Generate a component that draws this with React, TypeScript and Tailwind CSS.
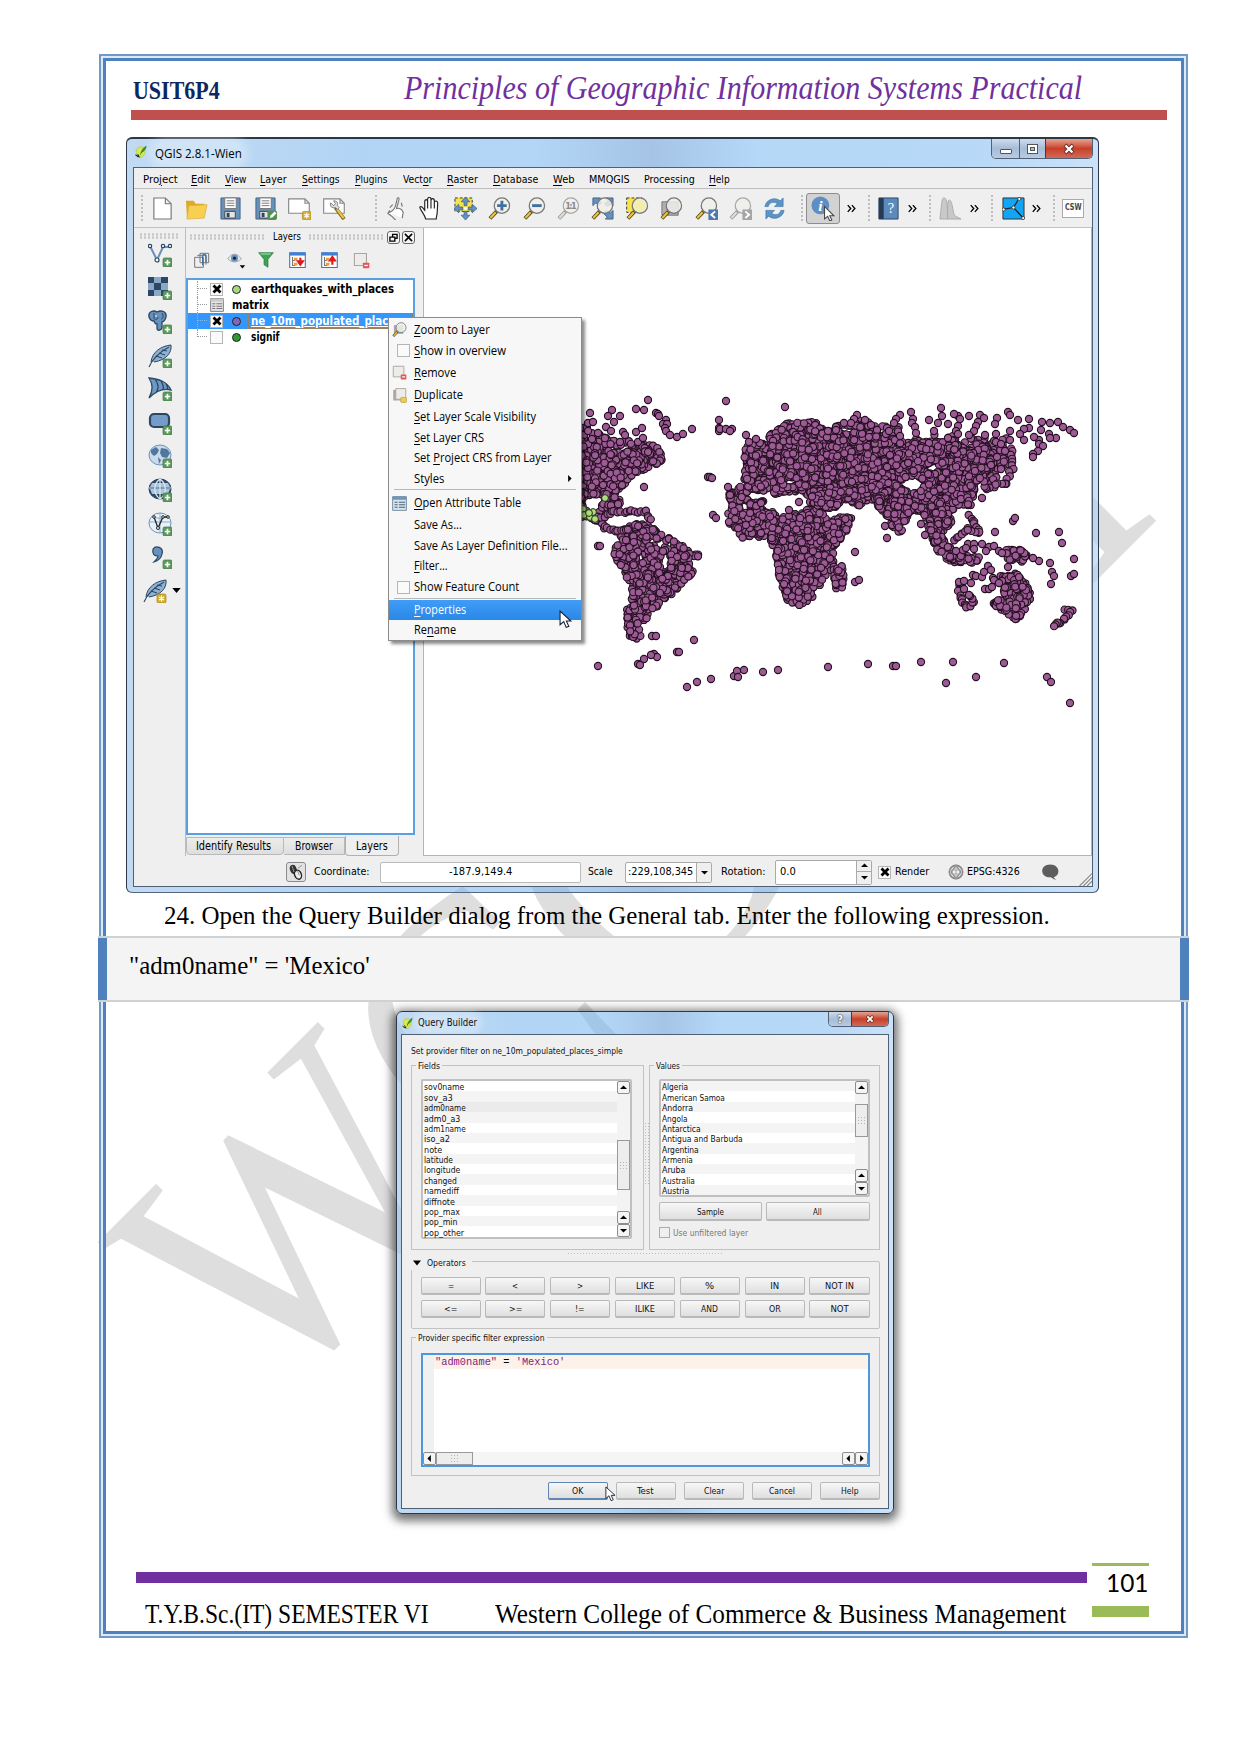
import React, { useLayoutEffect, useRef, useState } from "react";

/* Text set to an exact width: it is measured once, then condensed or widened. */
function Fit({ w, children, className = "" }: { w: number; children: React.ReactNode; className?: string }) {
  const ref = useRef<HTMLSpanElement>(null);
  const [k, setK] = useState(1);
  useLayoutEffect(() => {
    if (ref.current) setK(w / ref.current.offsetWidth);
  }, [w]);
  return (
    <span className={"inline-block shrink-0 whitespace-nowrap " + className} style={{ width: w }}>
      <span ref={ref} className="inline-block origin-left" style={{ transform: `scaleX(${k})` }}>
        {children}
      </span>
    </span>
  );
}

/* Label with an underlined accelerator letter, marked by "&". */
function Accel({ t }: { t: string }) {
  const i = t.indexOf("&");
  if (i < 0) return <>{t}</>;
  return (
    <>
      {t.slice(0, i)}
      <u className="underline-offset-2">{t[i + 1]}</u>
      {t.slice(i + 2)}
    </>
  );
}

function Svg({ children, s = 24, className = "" }: { children: React.ReactNode; s?: number; className?: string }) {
  return (
    <svg viewBox="0 0 24 24" width={s} height={s} className={"shrink-0 " + className} fill="none">
      {children}
    </svg>
  );
}

const B = "#6790bb";
const D = "#2c4763";

const Plus = () => (
  <g>
    <rect x="15" y="15" width="9" height="9" rx="1.5" fill="#5c9a5c" stroke="#3f7843" strokeWidth=".7" />
    <path d="M19.500 16.800v5.400M16.800 19.500h5.400" stroke="#fff" strokeWidth="1.700" />
  </g>
);
const Star = ({ x = 15, y = 15 }) => (
  <g transform={`translate(${x} ${y})`}>
    <rect width="9" height="9" rx="1.500" fill="#d3ae33" stroke="#a88718" strokeWidth=".7" />
    <path d="M4.500 1.500v6M1.900 3l5.200 3M7.100 3L1.900 6" stroke="#fff" strokeWidth="1.200" />
  </g>
);
const Lens = ({ gray = false, children }: { gray?: boolean; children?: React.ReactNode }) => (
  <g>
    <path d="M9 15L2 22.500" stroke={gray ? "#999" : "#554a20"} strokeWidth="4" />
    <path d="M8 16L2.500 22" stroke={gray ? "#ddd" : "#eec23c"} strokeWidth="2.200" />
    <circle cx="14.500" cy="9" r="8" fill="#eeeeea" fillOpacity=".85" stroke={gray ? "#a8a8a8" : "#777"} strokeWidth="1.300" />
    {children}
  </g>
);
const Page = () => <path d="M3 1h12l6 6v16H3zM15 1v6h6" fill="#fff" stroke="#777" strokeWidth="1.200" />;
const Wide = () => <path d="M.7 2h17l4.500 4.500V17H.7zM17.700 2v4.500h4.500" fill="#fff" stroke="#888" strokeWidth="1.200" />;
const Floppy = () => (
  <g>
    <path d="M2 1h20v22H2z" fill={B} stroke="#44658a" />
    <path d="M6 1h12v11H6z" fill="#fff" stroke="#777" />
    <path d="M8 4h8M8 6.500h8M8 9h8" stroke="#777" />
    <path d="M6 15h11v7H6z" fill="#e5e5e5" stroke="#444" />
    <path d="M8 16.500h3v4.500H8z" fill={D} />
  </g>
);
const Arrow = ({ r }: { r: number }) => (
  <path transform={`rotate(${r} 12 12)`} d="M12 0l4.500 5h-3v4h-3V5h-3z" fill={B} stroke="#3f648c" strokeWidth=".8" />
);

const fileIcons = [
  <Page />,
  <g>
    <path d="M1 4h8l2 3h9v14H2z" fill="#dba92c" />
    <path d="M4 9l19-1-3 14-18 1z" fill="#f8cf50" stroke="#ddb040" strokeWidth=".8" />
  </g>,
  <Floppy />,
  <g>
    <Floppy />
    <rect x="14" y="14" width="10" height="10" rx="2" fill="#528f53" />
    <path d="M16.500 22l1-3 4-4 2 2-4 4z" fill="#fff" />
  </g>,
  <g>
    <Wide />
    <Star />
  </g>,
  <g>
    <Wide />
    <path d="M13 11l9 12" stroke="#8b6a1f" strokeWidth="4" />
    <path d="M14.500 12.500l7 9.500" stroke="#efc749" strokeWidth="2.200" />
    <path d="M8 6c-1 4 1 6 5 5l2 2 2-2-2-2c1-4-1-5-4-5l2 3-2 2z" fill="#ddd" stroke="#666" strokeWidth=".8" />
  </g>,
];

const navIcons = [
  <path d="M4 16c4-1 6-3 7-7l2-8c2-1 2 1 1 4l-2 7c3-1 6 1 7 4l-1 6M5 14l-2 3 4 3 4 4M17 6l1 4M8 8L5 11" fill="#fff" stroke="#777" strokeWidth="1.200" />,
  <path d="M7 23c-1-4-3-6-4-8-2-3-3-5-1-5 2 0 3 3 4 4V5c0-3 3-3 3 0V2.500c0-3 3.500-3 3.500 0V4c0-3 3.500-3 3.500 0v2c0-2.500 3.500-2.500 3.500.5L19 16c0 3-1 4-1 7zM9 5v7M12.500 4v8M16 5v7" fill="#fff" stroke="#222" strokeWidth="1.200" />,
  <g>
    <path d="M1 1h18v14H1z" fill="#f4e44a" stroke="#333" strokeDasharray="3 2" />
    <Arrow r={0} /><Arrow r={90} /><Arrow r={180} /><Arrow r={270} />
    <circle cx="12" cy="12" r="1.500" fill="#fff" />
  </g>,
  <Lens><path d="M14.500 4v10M9.500 9h10" stroke="#416f9f" strokeWidth="3" /></Lens>,
  <Lens><path d="M9.500 9h10" stroke="#416f9f" strokeWidth="3" /></Lens>,
  <Lens gray><text x="14.500" y="12" fontSize="8.500" fontWeight="bold" textAnchor="middle" fill="#888" fontFamily="DejaVu Sans, sans-serif" textLength="12">1:1</text></Lens>,
  <g>
    <path d="M2 1h8L8 3l3 3-3 3-3-3-3 3zM23 1v8l-2-2-4 3-3-3 4-3-3-3zM23 23h-8l2-2-4-4 3-3 4 3 3-3z" fill={B} stroke="#3f648c" />
    <Lens />
  </g>,
  <g>
    <path d="M.7 1h16v15H.7z" fill="#f6e448" stroke="#333" strokeDasharray="3 2" />
    <Lens><circle cx="14.500" cy="9" r="6" fill="#f3edaa" /></Lens>
  </g>,
  <g>
    <path d="M2 5h17v14H2z" fill="#b6acb4" stroke="#777" />
    <Lens />
  </g>,
  <g><Lens /><path d="M14 13h10v11H14z" fill="#4c7bab" /><path d="M21 15l-4 3.500 4 3.500" stroke="#fff" strokeWidth="2" /></g>,
  <g><Lens gray /><path d="M14 13h10v11H14z" fill="#a5a5a5" /><path d="M17 15l4 3.500-4 3.500" stroke="#fff" strokeWidth="2" /></g>,
  <g fill="#5b94c9" stroke="#376b9d" strokeWidth=".6">
    <path d="M2 10C3 3 12-1 18 4l3-3v9h-9l3-3C11 4 6 6 5.500 10z" />
    <path d="M22 14c-1 7-10 11-16 6l-3 3v-9h9l-3 3c4 3 9 1 9.500-3z" />
  </g>,
];

const Feather = () => (
  <g>
    <path d="M3 18C4 8 13 2 23 1c1 8-5 15-17 17" fill="#8fb2d3" stroke={D} />
    <path d="M1 23C4 16 10 9 21 3M8 12l6 2M11 9l6 2M14 6l5 1" stroke={D} strokeWidth="1.100" />
  </g>
);

const sideIcons = [
  <g>
    <path d="M2 3l7 14 6-13h7" stroke={B} strokeWidth="2" />
    <g fill="#fff" stroke={D} strokeWidth="1.200"><circle cx="2" cy="3" r="1.700" /><circle cx="9" cy="17" r="2" /><circle cx="15" cy="3" r="1.700" /><circle cx="22" cy="3" r="1.700" /></g>
  </g>,
  <g>
    <path d="M0 1h20v19H0z" fill="#89a8c9" />
    <path d="M0 1h6v6H0zM13 1h7v6h-7zM6 7h7v7H6zM0 14h6v6H0zM13 14h7v6h-7z" fill={D} />
  </g>,
  <g>
    <path d="M1 7C0 1 6 0 9 2c4-2 10-1 9 5-1 3-2 5-4 5v6c-1 3-5 3-5 0v-4c-3 0-2-2-3-3-3 0-4-1-5-4z" fill={B} stroke={D} strokeWidth="1.300" />
    <path d="M6 3v5c0 2 4 2 4-1M14 3c2 3 1 6-1 6" stroke={D} />
    <circle cx="8" cy="6" r=".8" fill="#fff" />
  </g>,
  <Feather />,
  <path d="M1 1c9 1 18 3 22 12-8-2-15 1-22 8 4-7 4-14 0-20zM7 2c4 6 4 9 1 14M13 4c3 5 3 8 1 9M18 7c2 3 2 5 1 6" fill="#6f99c5" stroke={D} strokeWidth="1.300" />,
  <rect x="2" y="3" width="19" height="13" rx="4" fill="#759bc9" stroke={D} strokeWidth="2.200" />,
  <g>
    <ellipse cx="12" cy="11" rx="11" ry="10" fill="#c9daec" stroke="#6d93ba" />
    <path d="M3 6l5-3 3 3-2 4-3 2-3-3zM13 4l6 1 3 4-3 5-5-1-2-4zM10 13l3 3-2 4z" fill="#50779f" />
  </g>,
  <g>
    <ellipse cx="12" cy="11" rx="11" ry="10" fill={D} stroke={D} />
    <path d="M4 5h16l2 4H2zM2 11h20l-2 5H4z" fill="#a8c4df" />
    <path d="M12 1v20M12 1c-7 5-7 15 0 20M12 1c7 5 7 15 0 20M1 10h22" stroke="#e0ebf5" strokeWidth="1.200" />
  </g>,
  <g>
    <ellipse cx="12" cy="11" rx="11" ry="10" fill="#e8f0f8" stroke="#6d93ba" />
    <path d="M12 1v20M1 10h22M4 4c5 3 11 3 16 0" stroke="#8aaed0" />
    <path d="M6 5l4 11 5-11h5" stroke="#222" strokeWidth="1.300" />
    <g fill="#fff" stroke="#222"><circle cx="6" cy="5" r="1.300" /><circle cx="10" cy="16" r="1.500" /><circle cx="15" cy="5" r="1.300" /><circle cx="20" cy="5" r="1.300" /></g>
  </g>,
  <path d="M5 4c3-4 11-2 9 5-1 5-4 7-8 8 2-2 4-4 4-6-4 0-6-2-5-7z" fill={B} stroke={D} strokeWidth="1.200" />,
];

const Logo = ({ s = 13 }) => (
  <Svg s={s}>
    <path d="M2 9C5 2 13 2 18 6c2 8-1 14-7 17-5-1-9-7-9-14z" fill="#d8ea4a" stroke="#a5b83e" />
    <path d="M9 20C10 12 14 5 21 1c1 5-3 10-8 13z" fill="#2f8a35" />
    <path d="M1 18l5 4M5 17l3 6" stroke="#222" strokeWidth="2" />
  </Svg>
);

const Grip = ({ className = "" }) => (
  <span className={"h-7 w-[5px] shrink-0 bg-[radial-gradient(circle,#bdbdbd_1px,transparent_1.300px)] bg-[length:4px_4px] " + className} />
);
const HGrip = ({ className = "" }) => (
  <span className={"h-[6px] bg-[radial-gradient(circle,#c3c3c3_1px,transparent_1.300px)] bg-[length:4px_3px] " + className} />
);
const Slot = ({ children }: { children: React.ReactNode }) => (
  <span className="flex w-[34.400px] shrink-0 justify-center"><Svg s={23}>{children}</Svg></span>
);
const More = ({ className = "" }) => (
  <Svg s={9} className={className}><path d="M2 3l8 9-8 9M13 3l8 9-8 9" stroke="#000" strokeWidth="3.500" /></Svg>
);
const Pointer = ({ className = "", h = 18 }) => (
  <svg viewBox="0 0 12 18" height={h} className={className}>
    <path d="M1 1v13l3.500-3 2.300 5.500 2.500-1L7 10.500h4.300z" fill="#fff" stroke="#111c33" />
  </svg>
);
const Tri = ({ d }: { d: "up" | "down" | "left" | "right" }) => {
  const p = { up: "M0 7l5-5 5 5z", down: "M0 3l5 5 5-5z", left: "M7 0L2 5l5 5z", right: "M3 0l5 5-5 5z" }[d];
  return <svg viewBox="0 0 10 10" width="7" height="7"><path d={p} fill="#000" /></svg>;
};

/* ---------- World map of populated places ---------- */
type Pt = [number, number];
const lands: { n: number; p: Pt[] }[] = [
  { n: 45, p: [[583, 425], [596, 435], [620, 440], [638, 445], [648, 440], [652, 448], [582, 448]] },
  { n: 400, p: [[580, 442], [592, 447], [612, 452], [638, 453], [642, 446], [655, 446], [664, 461], [648, 469], [632, 475], [622, 487], [612, 496], [582, 497]] },
  { n: 35, p: [[605, 495], [616, 496], [621, 505], [608, 512], [598, 513]] },
  { n: 36, p: [[578, 492], [586, 495], [588, 510], [580, 520]] },
  { n: 560, p: [[620, 532], [632, 524], [648, 526], [664, 537], [682, 547], [698, 555], [690, 577], [678, 588], [664, 602], [650, 615], [641, 627], [639, 643], [627, 637], [625, 612], [631, 585], [620, 572], [612, 555], [616, 542]] },
  { n: 980, p: [[727, 496], [740, 487], [752, 492], [764, 501], [774, 512], [787, 515], [800, 514], [812, 508], [818, 506], [826, 520], [832, 519], [851, 517], [845, 533], [832, 549], [833, 568], [820, 584], [809, 604], [790, 608], [781, 590], [777, 572], [775, 555], [768, 537], [742, 539], [727, 524]] },
  { n: 40, p: [[832, 571], [845, 565], [841, 589], [834, 591]] },
  { n: 900, p: [[742, 450], [756, 442], [770, 448], [768, 436], [784, 425], [798, 423], [814, 423], [828, 434], [830, 506], [812, 506], [800, 497], [782, 494], [765, 497], [749, 491], [742, 482], [745, 467]] },
  { n: 90, p: [[832, 428], [856, 417], [872, 424], [900, 426], [916, 430], [950, 434], [972, 434], [986, 440], [1008, 436], [1012, 450], [830, 446]] },
  { n: 75, p: [[972, 443], [1000, 450], [1012, 452], [1010, 470], [1000, 478], [985, 486]] },
  { n: 2100, p: [[826, 434], [842, 428], [856, 422], [872, 428], [886, 438], [905, 444], [930, 442], [950, 444], [972, 450], [988, 449], [994, 462], [988, 472], [976, 482], [970, 508], [956, 506], [949, 514], [951, 526], [942, 532], [936, 540], [924, 522], [919, 512], [907, 516], [902, 534], [891, 531], [883, 513], [868, 501], [858, 507], [840, 501], [834, 511], [812, 506], [808, 492], [824, 486]] },
  { n: 110, p: [[925, 522], [938, 534], [947, 547], [958, 556], [978, 558], [976, 564], [950, 563], [934, 551]] },
  { n: 160, p: [[999, 577], [1014, 573], [1027, 587], [1030, 598], [1020, 618], [1013, 621], [1000, 612], [991, 603], [1003, 598]] },
  { n: 38, p: [[1003, 550], [1021, 551], [1029, 558], [1022, 563], [1006, 561]] },
];
const holes: [number, number, number, number][] = [
  [798, 502, 8, 7], [743, 507, 2, 3], [751, 497, 4, 2], [767, 507, 4, 2], [789, 483, 3, 2], [781, 514, 5, 1], [767, 496, 1, 2],
  [911, 485, 9, 5], [931, 469, 6, 2], [664, 562, 2, 7], [659, 545, 3, 2], [640, 556, 1, 1], [588, 504, 4, 5], [846, 431, 6, 1], [908, 432, 6, 5],
];
const trails: Pt[][] = [
  [[596, 518], [604, 528], [616, 533], [628, 530]],
  [[584, 517], [596, 520], [612, 513], [630, 512], [644, 513], [651, 521]],
  [[1011, 450], [1011, 470], [1004, 484], [994, 487], [986, 490], [980, 480]],
  [[968, 516], [972, 524], [979, 534], [968, 530]],
  [[953, 541], [961, 534], [968, 530]],
  [[958, 583], [957, 590], [960, 600], [965, 608], [972, 604], [970, 597]],
  [[1065, 610], [1070, 613], [1064, 619], [1057, 625], [1052, 627]],
];
const singles: Pt[] = [
  [655, 414], [657, 415], [658, 417], [665, 421], [662, 425], [666, 425], [664, 429], [665, 432], [669, 436], [676, 438], [682, 435],
  [718, 429], [718, 432], [719, 430], [725, 430], [731, 430], [729, 432],
  [899, 416], [895, 420], [893, 424], [886, 429], [885, 435], [912, 420], [911, 424], [914, 428], [915, 434], [888, 432], [899, 437],
  [856, 416], [853, 420], [864, 421], [870, 426], [850, 424], [843, 424], [835, 428], [835, 431], [827, 432],
  [957, 417], [959, 420], [957, 427], [955, 432], [957, 435], [979, 416], [977, 423], [975, 427], [973, 432], [968, 436],
  [955, 552], [962, 551], [967, 545], [973, 545], [981, 545], [988, 548], [993, 547], [998, 552], [1001, 554], [973, 550], [965, 549], [985, 552],
  [958, 583], [963, 582], [970, 584], [972, 576], [975, 577], [981, 578], [983, 573], [987, 567], [990, 571], [992, 579], [993, 581],
  [984, 590], [988, 590], [991, 588], [1001, 582], [998, 584], [963, 590], [968, 596],
  [647, 401], [725, 402], [784, 408], [635, 410], [643, 411], [611, 411], [607, 417], [619, 417], [589, 414], [587, 424], [592, 423], [613, 423],
  [605, 428], [610, 432], [587, 432], [597, 434], [622, 433], [624, 436], [619, 443], [635, 433], [641, 429], [637, 443], [642, 439], [591, 440],
  [691, 430], [718, 421], [707, 478], [709, 478], [711, 479], [643, 488], [712, 516], [715, 519], [597, 547], [599, 547], [651, 637], [655, 637], [693, 641],
  [653, 655], [656, 658], [650, 656], [643, 660], [637, 665], [639, 666], [676, 653], [678, 653], [597, 667], [686, 688], [696, 683], [710, 680],
  [733, 677], [736, 672], [737, 678], [743, 671], [762, 673], [777, 671], [827, 668], [867, 665], [892, 667], [895, 667], [920, 663], [952, 663],
  [1003, 664], [945, 684], [975, 678], [1046, 678], [1050, 683], [1069, 704], [854, 553], [854, 583], [858, 581], [886, 539], [884, 527],
  [920, 525], [924, 536], [981, 499], [1012, 522], [1014, 519], [994, 533], [1035, 534], [1058, 533], [1061, 544], [1073, 560], [1049, 564],
  [1051, 573], [1053, 577], [1050, 585], [1070, 577], [1073, 575], [1038, 562], [1032, 559], [1007, 568], [940, 409], [910, 413], [928, 421],
  [941, 417], [937, 424], [933, 432], [947, 425], [953, 415], [968, 417], [983, 419], [996, 419], [994, 425], [1007, 413], [1009, 416],
  [1017, 421], [1028, 420], [1028, 429], [1023, 430], [1019, 435], [1023, 441], [1009, 432], [1009, 441], [995, 435], [995, 443], [984, 436],
  [1041, 423], [1049, 424], [1057, 423], [1062, 428], [1069, 431], [1073, 434], [1040, 431], [1048, 435], [1055, 439], [1038, 441], [1033, 438],
  [1038, 445], [1042, 447], [1037, 452], [1032, 455], [1032, 458], [1049, 439], [745, 436], [748, 443], [755, 440], [727, 488], [729, 496], [798, 503],
  [1000, 445], [1004, 452], [996, 458], [990, 466], [1000, 470], [947, 439], [760, 504], [788, 511],
];

function seeded(seed: number) {
  let s = seed;
  return () => ((s = (s * 16807) % 2147483647) - 1) / 2147483646;
}
function inside([x, y]: Pt, p: Pt[]) {
  let r = false;
  for (let i = 0, j = p.length - 1; i < p.length; j = i++)
    if (p[i][1] > y !== p[j][1] > y && x < ((p[j][0] - p[i][0]) * (y - p[i][1])) / (p[j][1] - p[i][1]) + p[i][0]) r = !r;
  return r;
}
function buildPlaces(): Pt[] {
  const rnd = seeded(4217);
  const out: Pt[] = [];
  const dry = ([x, y]: Pt) => !holes.some(([a, b, c, d]) => ((x - a) / (c + 3)) ** 2 + ((y - b) / (d + 3)) ** 2 < 1);
  for (const { n, p } of lands) {
    const xs = p.map((q) => q[0]);
    const ys = p.map((q) => q[1]);
    const x0 = Math.min(...xs), x1 = Math.max(...xs), y0 = Math.min(...ys), y1 = Math.max(...ys);
    for (let k = 0, guard = 0; k < n && guard < 20000; guard++) {
      const q: Pt = [x0 + rnd() * (x1 - x0), y0 + rnd() * (y1 - y0)];
      if (inside(q, p) && dry(q)) { out.push(q); k++; }
    }
  }
  for (const t of trails)
    for (let i = 0; i + 1 < t.length; i++) {
      const [a, b] = [t[i], t[i + 1]];
      const m = Math.max(1, Math.round(Math.hypot(b[0] - a[0], b[1] - a[1]) / 3.5));
      for (let k = 0; k <= m; k++) out.push([a[0] + ((b[0] - a[0]) * k) / m + rnd() * 3 - 1.5, a[1] + ((b[1] - a[1]) * k) / m + rnd() * 3 - 1.5]);
    }
  return out.concat(singles);
}
const places = buildPlaces();
const quakes: Pt[] = [[582, 510], [583, 516], [589, 518], [592, 513], [588, 514], [594, 520], [604, 499]];

const WorldMap = () => (
  <svg viewBox="423 229 667 627" width="667" height="627">
    {places.map(([x, y], i) => <circle key={i} cx={x} cy={y} r="3.600" fill="#9c5b95" stroke="#241020" strokeWidth="1.100" />)}
    {quakes.map(([x, y], i) => <circle key={i} cx={x} cy={y} r="3.400" fill="#aede7c" stroke="#20301a" strokeWidth="1" />)}
  </svg>
);

/* ---------- QGIS window ---------- */
const menus: [string, number, string][] = [
  ["Pro&ject", 35, "ml-[9px]"], ["&Edit", 19, "ml-[13px]"], ["&View", 21, "ml-[15px]"], ["&Layer", 27, "ml-[14px]"],
  ["&Settings", 38, "ml-[15px]"], ["&Plugins", 32, "ml-[15px]"], ["Vect&or", 29, "ml-[16px]"], ["&Raster", 31, "ml-[15px]"],
  ["&Database", 45, "ml-[15px]"], ["&Web", 22, "ml-[15px]"], ["MMQGIS", 41, "ml-[14px]"], ["Processing", 51, "ml-[14px]"], ["&Help", 21, "ml-[14px]"],
];

const glass = "bg-[linear-gradient(90deg,rgba(160,198,236,.65),rgba(130,186,238,.62)_25%,rgba(115,180,240,.55)_42%,rgba(110,160,214,.62)_54%,rgba(120,184,242,.55)_65%,rgba(125,185,240,.55)_88%,rgba(175,210,245,.65))]";

const Check = ({ on = false, className = "" }) => (
  <span className={"flex h-[13px] w-[13px] shrink-0 items-center justify-center border border-[#b5b5b5] bg-[#fafafa] " + className}>
    {on && <svg viewBox="0 0 10 10" width="10" height="10"><path d="M1.500 1.500l7 7M8.500 1.500l-7 7" stroke="#000" strokeWidth="2.800" /></svg>}
  </span>
);

const SmallSheet = ({ kind }: { kind: "minus" | "dup" }) => (
  <g>
    {kind === "dup" && <path d="M2 3h17v17H2z" fill="#aaa69f" />}
    <path d={kind === "dup" ? "M6 1h16v17H6z" : "M2 2h17v17H2z"} fill="#eeece8" stroke="#aaa69f" strokeWidth="1.500" />
    {kind === "minus" ? (
      <g><rect x="14" y="15" width="9" height="8" rx="1" fill="#e0585b" /><path d="M16 19h5" stroke="#fff" strokeWidth="1.800" /></g>
    ) : <rect x="14" y="15" width="9" height="8" rx="1" fill="#e7cf58" stroke="#b39a28" />}
  </g>
);
const TableIcon = ({ blue = false }) => (
  <g>
    <path d="M1 1h22v22H1z" fill={blue ? "#d7e4ec" : "#e4e4e4"} stroke={blue ? "#6f8ba0" : "#777"} strokeWidth="1.500" />
    <path d="M1 1h22v5H1z" fill={blue ? "#6f96b5" : "#c9c9c9"} />
    <path d="M4 10h5M11 10h10M4 14h5M11 14h10M4 18h5M11 18h10" stroke={blue ? "#47657c" : "#777"} strokeWidth="1.800" />
  </g>
);

function LayersPanel() {
  return (
    <div className="flex w-[235px] shrink-0 flex-col">
      <div className="flex h-[18px] items-center pl-[3px] text-[11px]">
        <HGrip className="w-[77px]" />
        <Fit w={28} className="ml-[7px] leading-4">Layers</Fit>
        <HGrip className="ml-[7px] w-[76px]" />
        <span className="ml-[3px] flex h-[13px] w-[13px] items-center justify-center rounded-[3px] border border-[#666] bg-[#f4f4f4]">
          <svg viewBox="0 0 10 10" width="9" height="9" fill="none"><path d="M4 4V1.500h5V6H7M1 4.500h5.500V9H1z" stroke="#000" strokeWidth="1.500" /></svg>
        </span>
        <span className="ml-[2px] flex h-[13px] w-[13px] items-center justify-center rounded-[3px] border border-[#666] bg-[#f4f4f4]">
          <svg viewBox="0 0 10 10" width="9" height="9"><path d="M1 1l8 8M9 1l-8 8" stroke="#000" strokeWidth="1.700" /></svg>
        </span>
      </div>
      <div className="flex h-[32px] items-center pb-[4px] pl-[8px]">
        <Svg s={16}><path d="M1 8h13v15H1zM5 5h13v14M9 2h13v14H9z" stroke="#777" strokeWidth="1.500" /><path d="M13 20V7c0-5 5-5 5 0v8" stroke="#41719f" strokeWidth="2" /></Svg>
        <Svg s={19} className="ml-[17px]"><path d="M1 10c5-8 12-8 17 0-5 5-12 5-17 0z" fill="#e6edf3" stroke="#8f99a3" /><circle cx="9.500" cy="9" r="4.500" fill="#6b94bd" /><circle cx="9.500" cy="9" r="2" fill="#223" /><path d="M16 18h7l-3.500 4z" fill="#000" /></Svg>
        <Svg s={16} className="ml-[12px]"><path d="M1 1h22l-8 10v12l-6-4v-8z" fill="#3da253" stroke="#27773b" /><path d="M4 3h15" stroke="#8dd39b" strokeWidth="2" /></Svg>
        {["M16 8v8M12.500 13l3.500 5 3.500-5z", "M16 18v-8M12.500 12L16 7l3.500 5z"].map((d) => (
          <Svg s={17} key={d} className="ml-[15px]"><path d="M1 1h22v21H1z" fill="#fff" stroke="#3e73b9" strokeWidth="1.500" /><path d="M1 1h22v4H1z" fill="#3e7fd9" /><path d="M5 7v12h4M5 12h4" stroke="#777" strokeWidth="1.500" /><path d="M7 8h5v4H7zM7 15h5v4H7z" fill="#ef9a45" /><path d={d} fill="#e01818" stroke="#e01818" strokeWidth="3" /></Svg>
        ))}
        <Svg s={17} className="ml-[15px]"><SmallSheet kind="minus" /></Svg>
      </div>
      <div className="h-[557px] w-[229px] border-2 border-[#5a9fe2] bg-white pt-px text-[11.500px] font-bold leading-4">
        <div className="flex h-4 items-center pl-[9px]">
          <span className="h-4 w-[10px] border-l border-dotted border-[#999]"><span className="block h-2 border-b border-dotted border-[#999]" /></span>
          <Check on className="ml-[3px]" /><span className="ml-[9px] h-[9px] w-[9px] rounded-full border border-[#223] bg-[#a9d87d]" />
          <Fit w={143} className="ml-[10px]">earthquakes_with_places</Fit>
        </div>
        <div className="flex h-4 items-center pl-[9px]">
          <span className="h-4 w-[10px] border-l border-dotted border-[#999]"><span className="block h-2 border-b border-dotted border-[#999]" /></span>
          <Svg s={14} className="ml-[3px]"><TableIcon /></Svg>
          <Fit w={37} className="ml-[8px]">matrix</Fit>
        </div>
        <div className="flex h-4 items-center bg-[#3397fb] pl-[9px] text-white">
          <span className="h-4 w-[10px] border-l border-dotted border-[#84b8ec]"><span className="block h-2 border-b border-dotted border-[#84b8ec]" /></span>
          <Check on className="ml-[3px]" /><span className="ml-[9px] h-[9px] w-[9px] rounded-full border border-[#223] bg-[#8268b8]" />
          <span className="ml-[7px] flex h-4 grow overflow-hidden border border-dotted border-[#9a7c60] pl-[2px] leading-[14px]"><Fit w={137}><u>ne_10m_populated_plac</u></Fit></span>
        </div>
        <div className="flex h-4 items-center pl-[9px]">
          <span className="h-4 w-[10px]"><span className="block h-2 border-b border-l border-dotted border-[#999]" /></span>
          <Check className="ml-[3px]" /><span className="ml-[9px] h-[9px] w-[9px] rounded-full border border-[#223] bg-[#2f9a30]" />
          <Fit w={29} className="ml-[10px]">signif</Fit>
        </div>
      </div>
      <div className="flex h-[21px] items-start pt-px text-[12px] leading-[17px]">
        <span className="mt-px flex h-[18px] w-[98px] justify-center rounded-b-sm border border-[#b9b9b9] bg-linear-to-b from-[#ededed] to-[#dedede] pr-[4px]"><Fit w={75}>Identify Results</Fit></span>
        <span className="mt-px flex h-[18px] w-[61px] justify-center border border-l-0 border-[#b9b9b9] bg-linear-to-b from-[#ededed] to-[#dedede]"><Fit w={38}>Browser</Fit></span>
        <span className="flex h-[20px] w-[54px] justify-center rounded-b-sm border border-t-0 border-[#b0b0b0] bg-[#efefef] pt-[2px]"><Fit w={32}>Layers</Fit></span>
      </div>
    </div>
  );
}

type Item = { t: string; w: number; h: string; icon?: React.ReactNode; box?: boolean; sub?: boolean; sep?: boolean; hot?: boolean };
const items: Item[] = [
  { t: "&Zoom to Layer", w: 76, h: "h-[21px]", icon: <g><path d="M3 5h15v14H3z" fill="#aaa" /><Lens /></g> },
  { t: "&Show in overview", w: 92, h: "h-[21px]", box: true },
  { t: "&Remove", w: 42, h: "h-[23px]", icon: <SmallSheet kind="minus" /> },
  { t: "&Duplicate", w: 49, h: "h-[22px]", icon: <SmallSheet kind="dup" /> },
  { t: "&Set Layer Scale Visibility", w: 122, h: "h-[21px]" },
  { t: "&Set Layer CRS", w: 70, h: "h-[21px]" },
  { t: "Set &Project CRS from Layer", w: 138, h: "h-[20.500px]" },
  { t: "Styles", w: 30, h: "h-[20.500px]", sub: true, sep: true },
  { t: "&Open Attribute Table", w: 107, h: "h-[23px]", icon: <TableIcon blue /> },
  { t: "Save As...", w: 48, h: "h-[21px]" },
  { t: "Save As Layer Definition File...", w: 154, h: "h-[20.500px]" },
  { t: "&Filter...", w: 34, h: "h-[20.500px]" },
  { t: "Show Feature Count", w: 105, h: "h-[21px]", box: true, sep: true },
  { t: "&Properties", w: 52, h: "h-[20px]", hot: true },
  { t: "Re&name", w: 42, h: "h-[20px]" },
];

const ContextMenu = () => (
  <div className="absolute left-[261px] top-[178px] w-[194px] border border-[#8b8b8b] bg-[#f7f7f7] pt-[1px] font-['Open_Sans',sans-serif] text-[12px] shadow-[3px_3px_3px_rgba(0,0,0,.45)]">
    {items.map((m) => (
      <React.Fragment key={m.t}>
        <div className={"flex items-center leading-none " + m.h + (m.hot ? " bg-linear-to-b from-[#3f9cf8] to-[#2a88e6] text-white" : "")}>
          <span className="flex w-[25px] shrink-0 justify-center">
            {m.icon && <Svg s={15} className="mr-[5px]">{m.icon}</Svg>}
            {m.box && <Check className="ml-[3px]" />}
          </span>
          <Fit w={m.w}><Accel t={m.t} /></Fit>
          {m.sub && <span className="ml-auto mr-[8px]"><Tri d="right" /></span>}
        </div>
        {m.sep && <div className="mb-[1.500px] ml-[5px] mr-[5px] h-px bg-[#b9b9b9]" />}
      </React.Fragment>
    ))}
    <Pointer className="absolute left-[170px] top-[292px]" h={19} />
  </div>
);

const WinButtons = ({ children }: { children: React.ReactNode }) => (
  <div className="flex overflow-hidden rounded-b-[5px] border border-t-0 border-[#526075]">{children}</div>
);
const closeX = <svg viewBox="0 0 12 12" width="12" height="12"><path d="M2 2l8 8M10 2l-8 8" stroke="#5c2a2a" strokeWidth="4" /><path d="M2.500 2.500l7 7M9.500 2.500l-7 7" stroke="#fff" strokeWidth="2.400" /></svg>;
const btnGlass = "flex items-center justify-center bg-linear-to-b from-[#cfdcec] via-[#a7bcd6] to-[#b6cce4]";
const btnRed = "flex items-center justify-center border-l border-[#6b2a2a] bg-linear-to-b from-[#e3a291] via-[#c73f28] to-[#cf6a58]";

const QgisWindow = () => (
  <div className={"relative ml-[20px] mt-[17px] flex h-[756px] w-[973px] flex-col rounded-[6px] border border-t-2 border-[#2c3848] border-b-[#53667c] pb-[5px] pl-[6px] pr-[5px] font-['DejaVu_Sans_Condensed','DejaVu_Sans',sans-serif] text-[#000] " + glass}>
    <div className="flex h-[28px] shrink-0 items-start">
      <span className="ml-[2px] mt-[6px]"><Logo /></span>
      <span className="ml-[7px] mt-[2px] rounded-full bg-white/30 shadow-[0_0_8px_6px_rgba(255,255,255,.3)]"><Fit w={87} className="font-['Open_Sans',sans-serif] text-[12.500px] leading-[18px]">QGIS 2.8.1-Wien</Fit></span>
      <div className="ml-auto"><WinButtons>
        <span className={"h-[19px] w-[27px] " + btnGlass}><span className="mt-[5px] h-[5px] w-[12px] rounded-[1px] border border-[#555] bg-white" /></span>
        <span className={"h-[19px] w-[26px] border-l border-[#526075] " + btnGlass}><span className="flex h-[10px] w-[11px] items-center justify-center border border-[#555] bg-white"><span className="h-1 w-[5px] border border-[#555] bg-[#a7bcd6]" /></span></span>
        <span className={"h-[19px] w-[47px] " + btnRed}>{closeX}</span>
      </WinButtons></div>
    </div>
    <div className="flex grow flex-col border border-[#4f6074] bg-[#efefef]">
      <div className="flex h-[21px] shrink-0 items-center border-b border-[#bdbdbd] pt-[3px] text-[11px] leading-4">
        {menus.map(([t, w, c]) => <Fit key={t} w={w} className={c}><Accel t={t} /></Fit>)}
      </div>
      <div className="flex h-[39px] shrink-0 items-center border-b border-[#c2c2c2] pl-[6px]">
        <Grip />
        {fileIcons.map((c, i) => <Slot key={i}>{c}</Slot>)}
        <Grip className="ml-[23px]" />
        {navIcons.map((c, i) => <Slot key={i}>{c}</Slot>)}
        <Grip className="ml-[8px]" />
        <span className="ml-[1px] flex h-[31px] w-[34px] shrink-0 items-center justify-center rounded-[3px] border border-[#8d8d8d] bg-[#d2d2d2]">
          <Svg s={25}><circle cx="9" cy="9" r="8.500" fill="#5e8fc4" /><text x="9" y="14.500" fontSize="15" fontStyle="italic" fontWeight="bold" textAnchor="middle" fill="#fff" fontFamily="Liberation Serif, serif">i</text><path d="M13 10v12l3-2.500 2 4.500 2-1-2-4h4z" fill="#fff" stroke="#444" /></Svg>
        </span>
        <More className="ml-[7px]" /><Grip className="ml-[11px]" />
        <Svg s={23} className="ml-[5px]"><path d="M2 1h20v22H2z" fill="#5d89bb" stroke={D} /><path d="M2 1h5v22H2z" fill="#263c54" /><text x="14.500" y="17" fontSize="15" textAnchor="middle" fill="#fff" fontFamily="Liberation Serif, serif">?</text></Svg>
        <More className="ml-[8px]" /><Grip className="ml-[11px]" />
        <Svg s={23} className="ml-[6px]"><path d="M1 23C3 5 3 1 5 1c3 0 4 4 4 22zM9 23c0-16 0-20 2-20 4 3 3 15 6 17l6 3z" fill="#c9c9c9" stroke="#aaa" /></Svg>
        <More className="ml-[8px]" /><Grip className="ml-[11px]" />
        <Svg s={23} className="ml-[7px]"><path d="M1 1h22v22H1z" fill="#12a5f5" stroke="#333" /><path d="M18 1l-6 10L1 13M12 11l11 12" stroke="#222" strokeWidth="1.300" /><g fill="#fff" stroke="#222" strokeWidth=".7"><circle cx="18" cy="2" r="1.600" /><circle cx="12" cy="11" r="1.600" /><circle cx="1.700" cy="13" r="1.600" /><circle cx="22" cy="22" r="1.600" /></g></Svg>
        <More className="ml-[7px]" /><Grip className="ml-[11px]" />
        <span className="ml-[5px] flex h-[19px] w-[22px] items-center justify-center border border-[#aaa] bg-white"><Fit w={17} className="text-[8px] font-bold leading-none text-[#444]">CSW</Fit></span>
      </div>
      <div className="flex h-[628px] shrink-0">
        <div className="flex w-[52px] shrink-0 flex-col border-r border-[#bcbcbc]">
          <HGrip className="ml-[5px] mt-[5px] h-[6px] w-[41px]" />
          <div className="-mt-[1px] flex flex-col items-center">
            {sideIcons.map((c, i) => <span key={i} className="flex h-[33.600px] items-center"><Svg>{c}<Plus /></Svg></span>)}
            <span className="flex h-[33.600px] items-center"><Svg className="ml-[4px]"><Feather /><Star x={14} y={15} /></Svg><svg viewBox="0 0 10 6" width="9" height="5" className="ml-[5px]"><path d="M0 0h10L5 6z" /></svg></span>
          </div>
        </div>
        <LayersPanel />
        <div className="ml-[2px] h-[628px] w-[669px] shrink-0 overflow-hidden border border-t-0 border-[#b5b5b5] bg-white"><WorldMap /></div>
      </div>
      <div className="flex grow items-center pt-[2px] text-[11px] leading-4">
        <span className="ml-[152px] flex h-[20px] w-[20px] items-center justify-center rounded-[3px] border border-[#8a8a8a] bg-[#e2e2e2]">
          <Svg s={16}><ellipse cx="8" cy="8" rx="5" ry="7" fill="#333" transform="rotate(-20 8 8)" /><ellipse cx="15" cy="16" rx="5" ry="7" fill="#eee" stroke="#222" strokeWidth="2" transform="rotate(-20 15 16)" /><path d="M6 3l3 9M14 10l3 7M15 6l6-4" stroke="#999" strokeWidth="1.500" /></Svg>
        </span>
        <Fit w={56} className="ml-[8px]">Coordinate:</Fit>
        <span className="ml-[10px] flex h-[21px] w-[201px] items-center justify-center rounded-[2px] border border-[#bbb] bg-white"><Fit w={63}>-187.9,149.4</Fit></span>
        <Fit w={25} className="ml-[7px]">Scale</Fit>
        <span className="ml-[12px] flex h-[21px] w-[87px] items-center rounded-[2px] border border-[#aaa] bg-white pl-[2px]"><Fit w={65}>:229,108,345</Fit><span className="ml-auto flex h-full w-[15px] items-center justify-center border-l border-[#aaa] bg-[#efefef]"><Tri d="down" /></span></span>
        <Fit w={45} className="ml-[9px]">Rotation:</Fit>
        <span className="ml-[9px] flex h-[25px] w-[97px] items-center rounded-[2px] border border-[#aaa] bg-white pl-[4px]"><Fit w={16}>0.0</Fit>
          <span className="ml-auto flex h-full w-[15px] flex-col border-l border-[#aaa] bg-[#efefef]"><span className="flex h-1/2 items-center justify-center border-b border-[#aaa]"><Tri d="up" /></span><span className="flex h-1/2 items-center justify-center"><Tri d="down" /></span></span>
        </span>
        <Check on className="ml-[6px]" />
        <Fit w={34} className="ml-[4px]">Render</Fit>
        <Svg s={16} className="ml-[19px]"><circle cx="12" cy="12" r="10" stroke="#888" strokeWidth="2.500" /><path d="M12 2l7 10-7 10-7-10z" stroke="#888" strokeWidth="2" /><path d="M2 9h20M2 15h20M12 2v20" stroke="#aaa" strokeWidth="1.500" /></Svg>
        <Fit w={53} className="ml-[3px]">EPSG:4326</Fit>
        <Svg s={18} className="ml-[21px]"><path d="M12 2c14 0 14 15 5 17l3 4-7-4C-2 20-2 2 12 2z" fill="#5d5d5d" /></Svg>
        <Svg s={13} className="ml-auto self-end"><path d="M1 24L24 1M8 24L24 8M15 24l9-9" stroke="#888" strokeWidth="2" /></Svg>
      </div>
    </div>
    <ContextMenu />
  </div>
);

/* ---------- Query builder dialog ---------- */
const fields: [string, number][] = [["sov0name", 40], ["sov_a3", 29], ["adm0name", 42], ["adm0_a3", 36], ["adm1name", 42], ["iso_a2", 26], ["note", 18], ["latitude", 29], ["longitude", 36], ["changed", 33], ["namediff", 35], ["diffnote", 31], ["pop_max", 36], ["pop_min", 33], ["pop_other", 40]];
const values: [string, number][] = [["Algeria", 26], ["American Samoa", 63], ["Andorra", 31], ["Angola", 26], ["Antarctica", 39], ["Antigua and Barbuda", 81], ["Argentina", 37], ["Armenia", 31], ["Aruba", 23], ["Australia", 33], ["Austria", 27]];
const ops: [string, number][] = [["=", 6], ["<", 6], [">", 6], ["LIKE", 18], ["%", 9], ["IN", 9], ["NOT IN", 29], ["<=", 13], [">=", 13], ["!=", 10], ["ILIKE", 20], ["AND", 17], ["OR", 12], ["NOT", 18]];

const Btn = ({ t, w, className = "" }: { t: string; w: number; className?: string }) => (
  <span className={"flex h-[18px] items-center justify-center rounded-[2px] border border-b-2 bg-linear-to-b from-[#f7f7f7] to-[#dfdfdf] pt-px " + (className.includes("border-") ? "" : "border-[#b9b9b9] ") + className}><Fit w={w}>{t}</Fit></span>
);
const SB = ({ d, className = "" }: { d: "up" | "down" | "left" | "right"; className?: string }) => (
  <span className={"flex h-[13px] w-[13px] shrink-0 items-center justify-center rounded-[2px] border border-[#8d8d8d] bg-[#f4f4f4] " + className}><Tri d={d} /></span>
);
const Thumb = ({ className = "" }) => (
  <span className={"flex items-center justify-center border border-[#999] bg-[#ededed] " + className}><span className="h-[9px] w-[9px] bg-[radial-gradient(circle,#b5b5b5_.6px,transparent_.9px)] bg-[length:3px_3px]" /></span>
);
const rowsOf = (list: [string, number][], first: number) => (
  <div className="flex grow flex-col">
    {list.map(([t, w], i) => (
      <div key={t} className={"flex h-[10.380px] items-center pl-[1px] pt-[2px] leading-none " + (first === 0 && i === 2 ? "bg-[#ebebeb]" : (i + first) % 2 ? "bg-[#f4f4f4]" : "bg-white")}><Fit w={w}>{t}</Fit></div>
    ))}
  </div>
);
const legend = "absolute -top-[6px] left-[4px] bg-[#efefef] px-[2px] leading-[11px]";

const QueryBuilder = () => (
  <div className={"relative ml-[290px] mt-[9px] flex h-[503px] w-[498px] flex-col rounded-[6px] border border-[#2c3848] px-[4px] pb-[4px] font-['DejaVu_Sans_Condensed','DejaVu_Sans',sans-serif] text-[9.500px] leading-none text-[#111] shadow-[0_3px_10px_4px_rgba(0,0,0,.55)] " + glass}>
    <div className="flex h-[22px] shrink-0 items-start">
      <span className="ml-[1px] mt-[5px]"><Logo s={12} /></span>
      <span className="ml-[4px] mt-[4px] rounded-full bg-white/30 shadow-[0_0_7px_5px_rgba(255,255,255,.3)]"><Fit w={59} className="text-[10px] leading-[14px]">Query Builder</Fit></span>
      <div className="ml-auto"><WinButtons>
        <span className={"h-[14px] w-[22px] " + btnGlass}><span className="font-bold text-[11px] text-white [text-shadow:0_0_2px_#333,0_0_1px_#333]">?</span></span>
        <span className={"h-[14px] w-[37px] " + btnRed}><span className="scale-75">{closeX}</span></span>
      </WinButtons></div>
    </div>
    <div className="flex grow flex-col border border-[#4f6074] bg-[#efefef] px-[8.500px]">
      <Fit w={212} className="mt-[10px] h-[11px] leading-[11px]">Set provider filter on ne_10m_populated_places_simple</Fit>
      <div className="mt-[9px] flex h-[185px]">
        <div className="relative w-[233px] border border-[#c2c2c2] pl-[9px] pt-[13px]">
          <div className={legend}><Fit w={22}>Fields</Fit></div>
          <div className="flex h-[160px] w-[211px] rounded-[2px] border-2 border-[#c0c0c0] bg-white">
            {rowsOf(fields, 0)}
            <div className="flex w-[13px] flex-col bg-[#f3f3f3]"><SB d="up" /><Thumb className="mt-[46px] h-[50px]" /><SB d="up" className="mt-auto" /><SB d="down" /></div>
          </div>
        </div>
        <span className="mt-[57px] h-[62px] w-[5px] bg-[radial-gradient(circle,#bbb_.7px,transparent_1px)] bg-[length:3px_3px]" />
        <div className="relative w-[231px] border border-[#c2c2c2] pl-[9px] pt-[13px]">
          <div className={legend}><Fit w={24}>Values</Fit></div>
          <div className="flex h-[118px] w-[211px] rounded-[2px] border-2 border-[#c0c0c0] bg-white">
            {rowsOf(values, 1)}
            <div className="flex w-[13px] flex-col bg-[#f3f3f3]"><SB d="up" /><Thumb className="mt-[10px] h-[33px]" /><SB d="up" className="mt-auto" /><SB d="down" /></div>
          </div>
          <div className="mt-[5px] flex gap-[4px]"><Btn t="Sample" w={27} className="h-[19px] w-[103.500px]" /><Btn t="All" w={9} className="h-[19px] w-[103.500px]" /></div>
          <div className="mt-[6px] flex items-center text-[#777]"><span className="h-[11px] w-[11px] border border-[#aaa]" /><Fit w={75} className="ml-[3px]">Use unfiltered layer</Fit></div>
        </div>
      </div>
      <span className="ml-[156px] mt-[2px] h-[3px] w-[155px] bg-[radial-gradient(circle,#bbb_.7px,transparent_1px)] bg-[length:3px_3px]" />
      <div className="relative mt-[6px] h-[68px] rounded-[2px] border border-[#c2c2c2] pl-[9px] pt-[15px]">
        <div className="absolute -left-px -top-[6px] flex items-center bg-[#efefef] pl-[2px] pr-[6px] leading-[14px]"><svg viewBox="0 0 10 6" width="8" height="6"><path d="M0 0h10L5 6z" /></svg><Fit w={39} className="ml-[6px]">Operators</Fit></div>
        <div className="grid w-[449px] grid-cols-7 gap-x-[4.700px] gap-y-[5px]">{ops.map(([t, w]) => <Btn key={t} t={t} w={w} />)}</div>
      </div>
      <div className="relative mt-[8px] h-[139px] border border-[#c2c2c2] pl-[9px] pt-[15px]">
        <div className={legend}><Fit w={127}>Provider specific filter expression</Fit></div>
        <div className="flex h-[114px] w-[449px] flex-col border-2 border-[#4f97dc] bg-white">
          <div className="flex grow">
            <span className="w-[11px] bg-[#f0f0f0]" />
            <div className="h-[14px] grow bg-[#fcf2ea] pl-[1px] font-['Liberation_Mono',monospace] text-[10.500px] leading-[14px] text-[#7f1d7f]"><Fit w={130}>"adm0name" <span className="text-black">=</span> 'Mexico'</Fit></div>
          </div>
          <div className="flex h-[13px] bg-[#f5f5f5]"><SB d="left" /><Thumb className="h-[13px] w-[37px]" /><SB d="left" className="ml-auto" /><SB d="right" /></div>
        </div>
      </div>
      <div className="mt-[6px] flex justify-end gap-[8px]">
        <Btn t="OK" w={11} className="w-[60px] border-[#5f87b2] bg-[#dfe8f2]" />
        <Btn t="Test" w={17} className="w-[60px]" /><Btn t="Clear" w={20} className="w-[60px]" /><Btn t="Cancel" w={26} className="w-[60px]" /><Btn t="Help" w={18} className="w-[60px]" />
      </div>
    </div>
    <Pointer className="absolute left-[208px] top-[474px]" h={16} />
  </div>
);

export default function App() {
  return (
    <div className="relative h-[1755px] w-[1241px] overflow-hidden bg-white font-['Liberation_Serif',serif] text-black">
      <svg className="absolute inset-0" width="1241" height="1755" viewBox="0 0 1241 1755" aria-hidden="true">
        <text transform="translate(266 1411) rotate(-45) scale(.909 1)" fontSize="364" fill="#dedede" fontFamily="Liberation Serif, serif">WCCBM</text>
      </svg>
      <div className="relative ml-[99px] mt-[54px] h-[1584px] w-[1089px] border-2 border-[#7199c6]">
        <div className="h-full border-2 border-[#dbe8f5]">
          <div className="h-full border-[3px] border-[#4f81bd]">
            <div className="-mt-px flex flex-col">
              <div className="flex h-[50px] items-start">
                <Fit w={87} className="ml-[27px] mt-[16px] text-[25px] font-bold leading-[30px] text-[#0d2860]">USIT6P4</Fit>
                <Fit w={678} className="ml-[184px] mt-[8px] text-[33px] italic leading-[40px] text-[#7030a0]">Principles of Geographic Information Systems Practical</Fit>
              </div>
              <div className="ml-[25px] h-[10px] w-[1036px] bg-[#c0504d]" />
              <QgisWindow />
              <div className="flex h-[43px] items-start"><Fit w={886} className="ml-[58px] mt-[8px] text-[26px] leading-[30px]">24. Open the Query Builder dialog from the General tab. Enter the following expression.</Fit></div>
              <div className="-mx-[8px] flex h-[66px] border-y-2 border-[#cfd1d4] bg-[#f4f4f4]">
                <span className="w-[9px] bg-[#4f81bd]" />
                <Fit w={241} className="ml-[22px] mt-[10px] text-[26px] leading-[36px]">"adm0name" = 'Mexico'</Fit>
                <span className="ml-auto w-[9px] bg-[#4f81bd]" />
              </div>
              <QueryBuilder />
              <div className="mt-[49px] flex">
                <div className="ml-[30px] mt-[9px] flex w-[951px] flex-col">
                  <div className="h-[11px] bg-[#7030a0]" />
                  <div className="mt-[11px] flex leading-[40px]">
                    <Fit w={284} className="ml-[9px] text-[28px]">T.Y.B.Sc.(IT) SEMESTER VI</Fit>
                    <Fit w={571} className="ml-[66px] text-[27px]">Western College of Commerce &amp; Business Management</Fit>
                  </div>
                </div>
                <div className="ml-[5px] flex w-[57px] flex-col">
                  <div className="h-[3px] bg-[#9bbb59]" />
                  <Fit w={43} className="ml-[14px] -mt-[3px] font-['Lato',sans-serif] text-[25px] leading-[38px]">101</Fit>
                  <div className="mt-[5px] h-[11px] bg-[#9bbb59]" />
                </div>
              </div>
            </div>
          </div>
        </div>
      </div>
    </div>
  );
}
